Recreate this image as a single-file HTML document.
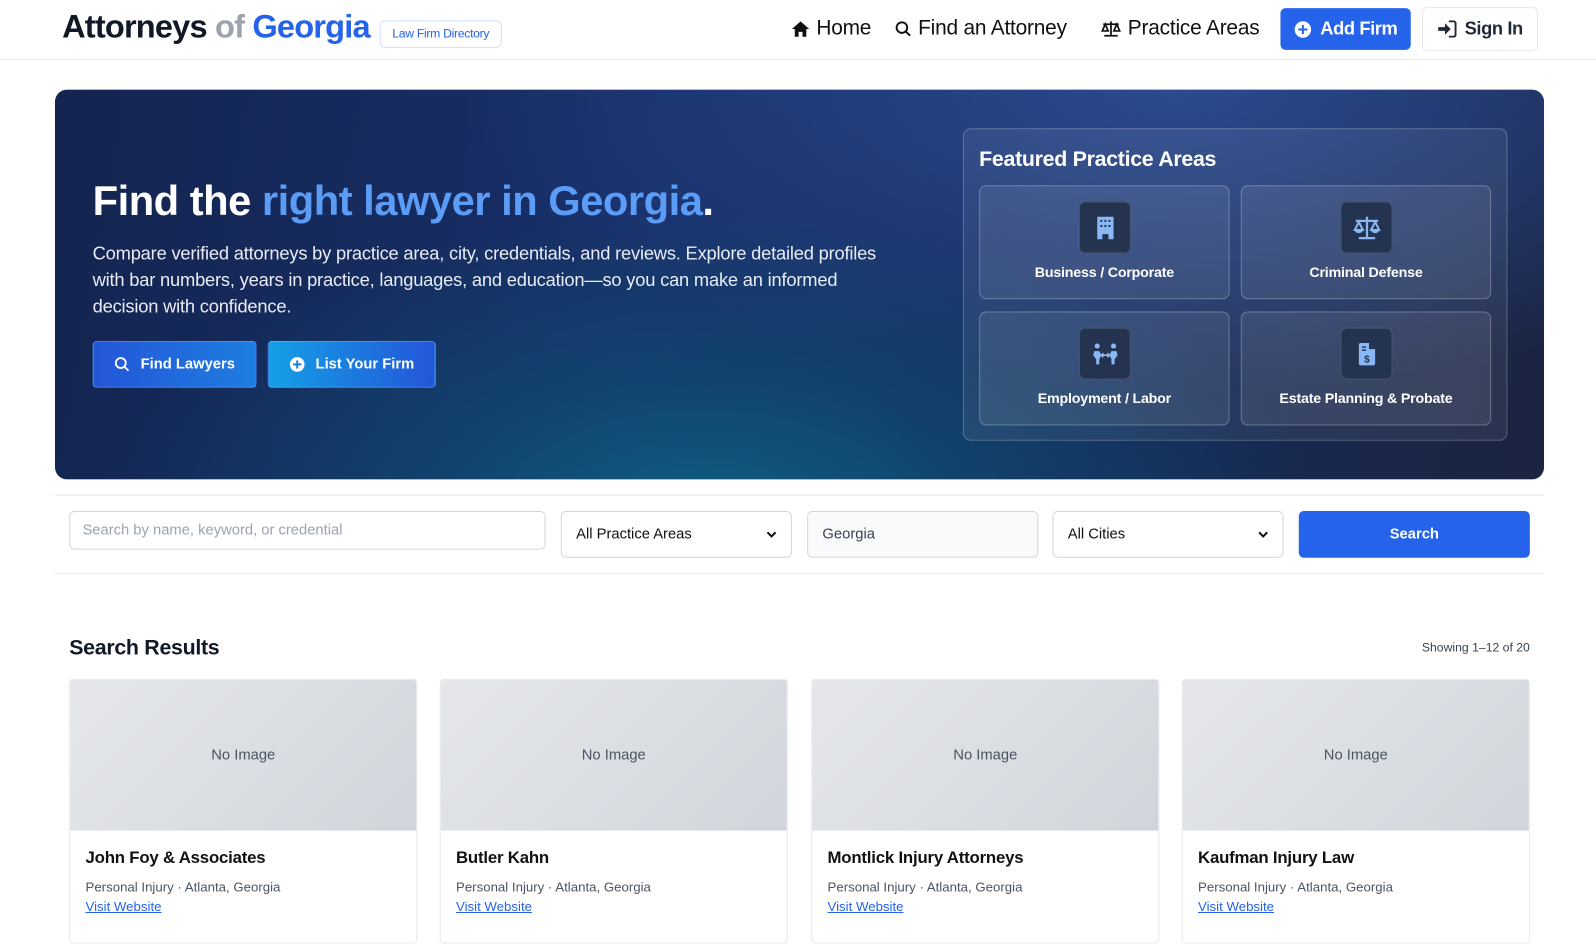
<!DOCTYPE html>
<html><head><meta charset="utf-8"><style>
*{box-sizing:border-box;margin:0;padding:0}
html,body{width:1596px;height:908px;overflow:hidden;background:#fff}
#w{position:absolute;left:0;top:0;width:1568px;height:892px;transform:scale(1.01786);transform-origin:0 0;font-family:"Liberation Sans",sans-serif;color:#111827}
.a{position:absolute}
.hdr{left:0;top:0;width:1568px;height:59px;border-bottom:1px solid #e5e7eb}
.logo{left:61px;top:8px;font-size:32px;font-weight:700;letter-spacing:-0.8px;white-space:nowrap}
.badge{left:373px;top:20px;width:120px;height:27px;border:1px solid #cfe0fb;border-radius:5px;color:#2563eb;font-size:12px;line-height:25px;text-align:center;letter-spacing:-0.3px}
.nav{top:16px;font-size:20.5px;color:#111;display:flex;align-items:center;gap:6px;white-space:nowrap;letter-spacing:-0.2px}
.btnb{left:1258px;top:8px;width:128px;height:41px;background:#2563eb;border-radius:5px;color:#fff;font-weight:700;font-size:18px;display:flex;align-items:center;justify-content:center;gap:8px;letter-spacing:-0.4px}
.btnw{left:1397px;top:7px;width:114px;height:43px;border:1px solid #e5e7eb;border-radius:5px;font-weight:700;font-size:18px;display:flex;align-items:center;justify-content:center;gap:8px;color:#1f2937;letter-spacing:-0.4px}
.hero{left:54px;top:88px;width:1463px;height:383px;border-radius:12px;overflow:hidden;
background:radial-gradient(ellipse 600px 300px at 640px 420px,#0f5f82 0%,rgba(14,80,115,.6) 45%,rgba(14,40,80,0) 100%),radial-gradient(ellipse 700px 300px at 1100px 0px,#2b4a8f 0%,rgba(30,60,120,0) 100%),linear-gradient(100deg,#13244f 0%,#18306a 40%,#152a5a 70%,#1b2440 100%)}
h1{left:91px;top:174px;font-size:41px;font-weight:700;color:#fff;letter-spacing:-0.5px;white-space:nowrap}
h1 span{color:#5b9cf6}
.p{left:91px;top:236px;width:790px;font-size:18px;line-height:26px;color:#e8ecf4;letter-spacing:-0.2px}
.hb{top:335px;height:46px;border-radius:4px;color:#fff;font-weight:700;font-size:14.5px;display:flex;align-items:center;justify-content:center;gap:10px;border:1px solid rgba(255,255,255,.2)}
.fp{left:946px;top:126px;width:535px;height:307px;border:1px solid rgba(255,255,255,.22);border-radius:8px;background:rgba(255,255,255,.07)}
.fpt{left:962px;top:145px;font-size:21px;font-weight:700;color:#fff;letter-spacing:-0.3px}
.card{width:246px;height:112px;border:1px solid rgba(255,255,255,.25);border-radius:7px;background:rgba(255,255,255,.08)}
.ib{position:absolute;left:97px;top:15px;width:51px;height:51px;background:#243350;border:1px solid rgba(255,255,255,.15);border-radius:6px;display:flex;align-items:center;justify-content:center}
.cl{position:absolute;left:0;right:0;top:76px;text-align:center;color:#fff;font-weight:700;font-size:14px;letter-spacing:-0.2px}
.hr{left:54px;width:1463px;height:1px;background:#e5e7eb}
.in{height:38px;border:1px solid #d1d5db;border-radius:5px;font-size:14.5px;padding-left:12px;display:flex;align-items:center}
.sel{top:502px;height:46px;border:1px solid #d1d5db;border-radius:5px;font-size:14.5px;padding:0 14px;display:flex;align-items:center;justify-content:space-between;color:#111}
.rc{top:667px;width:342px;height:260px;border:1px solid #e5e7eb;border-radius:4px;overflow:hidden}
.img{height:148px;background:linear-gradient(135deg,#e5e7eb,#d1d5db);display:flex;align-items:center;justify-content:center;color:#4b5563;font-size:14.5px}
.rt{position:absolute;left:15px;top:166px;font-weight:700;font-size:16.5px;color:#111;letter-spacing:-0.2px}
.rs{position:absolute;left:15px;top:196px;font-size:13px;color:#4b5563}
.rl{position:absolute;left:15px;top:215px;font-size:13px;color:#2563eb;text-decoration:underline}
</style></head><body><div id="w">
<div class="a hdr"></div>
<div class="a logo">Attorneys<span style="color:#9ca3af"> of </span><span style="color:#2563eb">Georgia</span></div>
<div class="a badge">Law Firm Directory</div>
<div class="a nav" style="left:777px"><svg width="19" height="17" viewBox="0 0 20 18"><path d="M10 1L1 9h3v8h4v-5h4v5h4V9h3z" fill="#111"/></svg>Home</div>
<div class="a nav" style="left:879px"><svg width="17" height="17" viewBox="0 0 18 18"><circle cx="7.5" cy="7.5" r="5.5" stroke="#111" stroke-width="2" fill="none"/><path d="M11.5 11.5L16 16" stroke="#111" stroke-width="2"/></svg>Find an Attorney</div>
<div class="a nav" style="left:1081px"><svg width="21" height="17" viewBox="0 0 22 18"><path d="M11 1v15M4 16h14M3 4h16M5 4L2 11h6zM17 4l-3 7h6z" stroke="#111" stroke-width="1.8" fill="none"/></svg>Practice Areas</div>
<div class="a btnb"><svg width="18" height="18" viewBox="0 0 20 20"><circle cx="10" cy="10" r="9" fill="#fff"/><path d="M10 5v10M5 10h10" stroke="#2563eb" stroke-width="2.2"/></svg>Add Firm</div>
<div class="a btnw"><svg width="19" height="17" viewBox="0 0 20 18"><path d="M1 7h7V3l6 6-6 6v-4H1z" fill="#1f2937"/><path d="M12 1h5a2 2 0 0 1 2 2v12a2 2 0 0 1-2 2h-5" stroke="#1f2937" stroke-width="2" fill="none"/></svg>Sign In</div>

<div class="a hero"></div>
<h1 class="a">Find the <span>right lawyer in Georgia</span>.</h1>
<div class="a p">Compare verified attorneys by practice area, city, credentials, and reviews. Explore detailed profiles with bar numbers, years in practice, languages, and education—so you can make an informed decision with confidence.</div>
<div class="a hb" style="left:91px;width:161px;background:linear-gradient(90deg,#2456d8,#1e7de0)"><svg width="16" height="16" viewBox="0 0 18 18"><circle cx="7.5" cy="7.5" r="5.5" stroke="#fff" stroke-width="2" fill="none"/><path d="M11.5 11.5L16 16" stroke="#fff" stroke-width="2"/></svg>Find Lawyers</div>
<div class="a hb" style="left:263px;width:165px;background:linear-gradient(90deg,#14a0e6,#2456d8)"><svg width="16" height="16" viewBox="0 0 20 20"><circle cx="10" cy="10" r="9" fill="#fff"/><path d="M10 5v10M5 10h10" stroke="#1a7fe0" stroke-width="2.4"/></svg>List Your Firm</div>

<div class="a fp"></div>
<div class="a fpt">Featured Practice Areas</div>
<div class="a card" style="left:962px;top:182px"><div class="ib"><svg width="18" height="24" viewBox="0 0 18 24"><path d="M1 1h16v22h-5v-5h-6v5H1z" fill="#8ab8f5"/><g fill="#243350"><rect x="4" y="4" width="2" height="2"/><rect x="8" y="4" width="2" height="2"/><rect x="12" y="4" width="2" height="2"/><rect x="4" y="9" width="2" height="2"/><rect x="8" y="9" width="2" height="2"/><rect x="12" y="9" width="2" height="2"/></g></svg></div><div class="cl">Business / Corporate</div></div>
<div class="a card" style="left:1219px;top:182px"><div class="ib"><svg width="28" height="24" viewBox="0 0 28 24"><path d="M14 1v20M6 22h16M3 5h22" stroke="#8ab8f5" stroke-width="2.2" fill="none"/><path d="M6 6L2 14h8zM22 6l-4 8h8z" fill="none" stroke="#8ab8f5" stroke-width="2"/><path d="M2 14h8a4 3 0 0 1-8 0zM18 14h8a4 3 0 0 1-8 0z" fill="#8ab8f5"/></svg></div><div class="cl">Criminal Defense</div></div>
<div class="a card" style="left:962px;top:306px"><div class="ib"><svg width="28" height="24" viewBox="0 0 28 24"><circle cx="6" cy="4" r="2.5" fill="#8ab8f5"/><circle cx="22" cy="4" r="2.5" fill="#8ab8f5"/><path d="M3 9h5l2 4-2 4v5H5v-5L2 13zM25 9h-5l-2 4 2 4v5h3v-5l3-4z" fill="#8ab8f5"/><path d="M10 13h8M10 13l2-2M10 13l2 2M18 13l-2-2M18 13l-2 2" stroke="#8ab8f5" stroke-width="1.6"/></svg></div><div class="cl">Employment / Labor</div></div>
<div class="a card" style="left:1219px;top:306px"><div class="ib"><svg width="18" height="24" viewBox="0 0 18 24"><path d="M3 1h8l6 6v14a2 2 0 0 1-2 2H3a2 2 0 0 1-2-2V3a2 2 0 0 1 2-2z" fill="#8ab8f5"/><path d="M11 1v6h6" fill="#243350"/><path d="M4 5h4M4 8h4" stroke="#243350" stroke-width="1.4"/><text x="9" y="20" font-size="10" font-weight="700" fill="#243350" text-anchor="middle" font-family="Liberation Sans">$</text></svg></div><div class="cl">Estate Planning &amp; Probate</div></div>

<div class="a hr" style="top:486px"></div>
<div class="a in" style="left:68px;top:502px;width:468px;color:#9ca3af">Search by name, keyword, or credential</div>
<div class="a sel" style="left:551px;width:227px">All Practice Areas<svg width="10" height="8" viewBox="0 0 10 8"><path d="M1 2l4 4 4-4" stroke="#111" stroke-width="2" fill="none"/></svg></div>
<div class="a sel" style="left:793px;width:227px;background:#f9fafb;color:#374151">Georgia</div>
<div class="a sel" style="left:1034px;width:227px">All Cities<svg width="10" height="8" viewBox="0 0 10 8"><path d="M1 2l4 4 4-4" stroke="#111" stroke-width="2" fill="none"/></svg></div>
<div class="a" style="left:1276px;top:502px;width:227px;height:46px;background:#2563eb;border-radius:5px;color:#fff;font-weight:700;font-size:14.5px;display:flex;align-items:center;justify-content:center">Search</div>
<div class="a hr" style="top:563px"></div>

<div class="a" style="left:68px;top:625px;font-size:21px;font-weight:700;letter-spacing:-0.3px">Search Results</div>
<div class="a" style="right:65px;top:629px;font-size:12px;color:#374151">Showing 1–12 of 20</div>

<div class="a rc" style="left:68px"><div class="img">No Image</div><div class="rt">John Foy &amp; Associates</div><div class="rs">Personal Injury · Atlanta, Georgia</div><div class="rl">Visit Website</div></div>
<div class="a rc" style="left:432px"><div class="img">No Image</div><div class="rt">Butler Kahn</div><div class="rs">Personal Injury · Atlanta, Georgia</div><div class="rl">Visit Website</div></div>
<div class="a rc" style="left:797px"><div class="img">No Image</div><div class="rt">Montlick Injury Attorneys</div><div class="rs">Personal Injury · Atlanta, Georgia</div><div class="rl">Visit Website</div></div>
<div class="a rc" style="left:1161px"><div class="img">No Image</div><div class="rt">Kaufman Injury Law</div><div class="rs">Personal Injury · Atlanta, Georgia</div><div class="rl">Visit Website</div></div>
</div></body></html>
